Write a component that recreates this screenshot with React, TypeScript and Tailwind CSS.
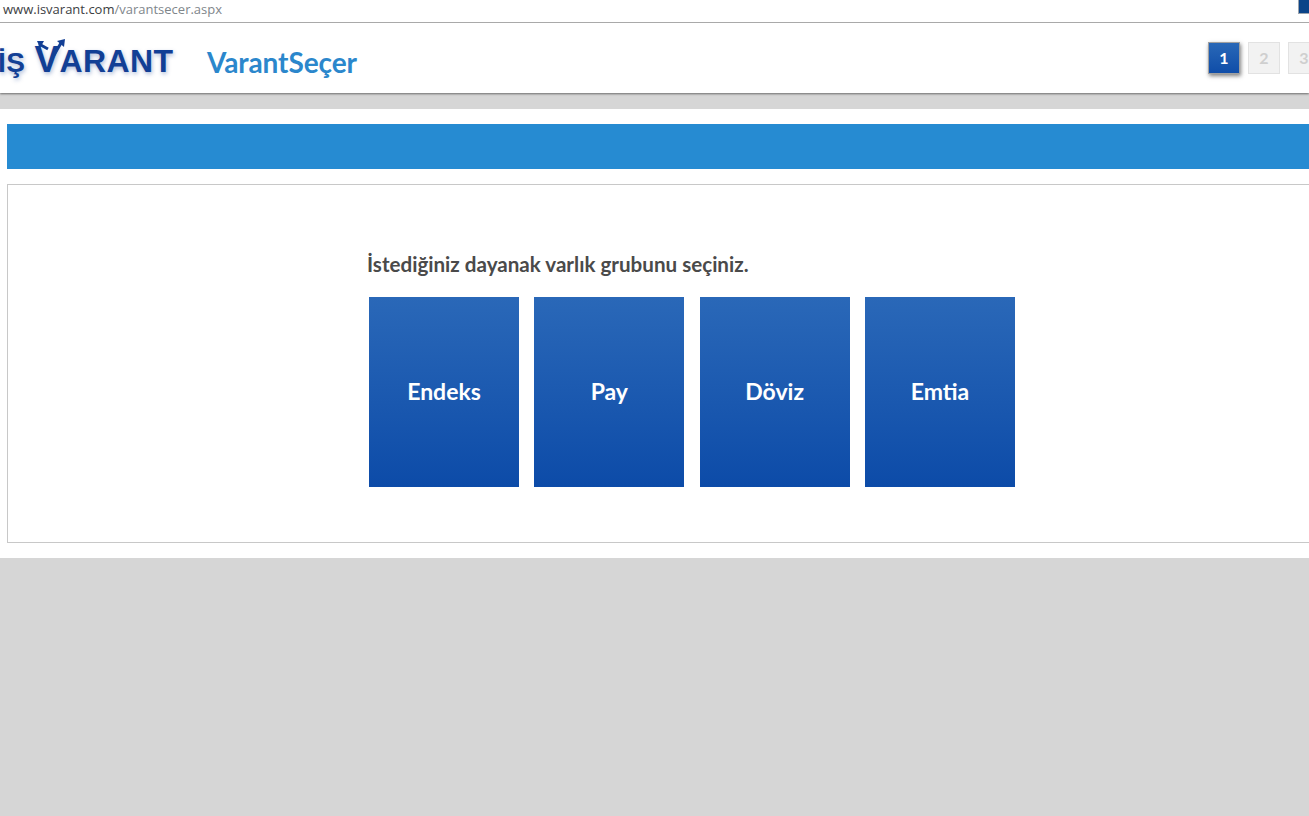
export default function App() {
  const cards = ["Endeks", "Pay", "Döviz", "Emtia"];
  return (
    <div className="flex h-[816px] w-[1309px] flex-col overflow-hidden bg-[#d6d6d6] font-['Lato','Noto_Sans',sans-serif]">
      <div className="relative flex h-[23px] shrink-0 items-start border-b border-[#a9a9a9] bg-white pl-[3px] font-['Open_Sans',sans-serif] text-[13px] leading-[18px]">
        <span className="text-[#3c4043]">www.isvarant.com</span>
        <span className="text-[#80868b]">/varantsecer.aspx</span>
        <div className="absolute left-[1298px] top-0 h-[14px] w-[20px] border-b border-l border-[#9aa3ad] bg-[#0b4488]" />
      </div>
      <header className="flex h-[70px] shrink-0 items-center justify-between bg-white shadow-[0_1px_2px_rgba(0,0,0,0.5)]">
        <div className="flex items-center">
          <div className="relative ml-[-2px] w-[176px] whitespace-nowrap pt-[2px] font-['Liberation_Sans',sans-serif] font-bold leading-none tracking-[0.4px] text-[#123f95] [text-shadow:1px_2px_4px_rgba(18,58,140,0.35)]">
            <span className="text-[28px]">İŞ </span>
            <span className="ml-[1px] text-[37px]">V</span>
            <span className="text-[32px]">ARANT</span>
            <svg className="absolute left-[36px] top-[-1px]" width="34" height="22" viewBox="0 0 34 22" fill="none">
              <path d="M5 6L14 11" stroke="#123f95" strokeWidth="3" />
              <path d="M3 3L10 3L6 10Z" fill="#123f95" />
              <path d="M20 17L27 5" stroke="#123f95" strokeWidth="3" />
              <path d="M23 3L31 1L30 9Z" fill="#123f95" />
            </svg>
          </div>
          <h1 className="ml-[33px] pt-[8px] text-[28px] font-bold leading-none tracking-[-0.1px] text-[#2b87cc]">VarantSeçer</h1>
        </div>
        <div className="mr-[-11px] flex gap-2 text-[16px] font-bold">
          <div className="flex h-8 w-8 items-center justify-center border border-[#a0a0a0] bg-gradient-to-b from-[#2968b7] to-[#0f4da8] text-white shadow-[1px_2px_4px_rgba(0,0,0,0.5)]">1</div>
          <div className="flex h-8 w-8 items-center justify-center border border-[#e2e2e2] bg-[#f2f2f2] text-[#cfcfcf]">2</div>
          <div className="flex h-8 w-8 items-center justify-center border border-[#e2e2e2] bg-[#f2f2f2] text-[#cfcfcf]">3</div>
        </div>
      </header>
      <main className="mt-[16px] flex h-[449px] w-[1309px] flex-col gap-[15px] bg-white pl-[7px] pt-[15px]">
        <div className="h-[45px] w-[1330px] shrink-0 bg-[#268bd2]" />
        <section className="h-[359px] w-[1330px] shrink-0 border border-[#c8c8c8] bg-white pl-[359px] pt-[65px]">
          <h2 className="text-[20.6px] font-bold leading-[28px] text-[#4a4a4a]">İstediğiniz dayanak varlık grubunu seçiniz.</h2>
          <div className="ml-[2px] mt-[19px] flex gap-[15.33px]">
            {cards.map((c) => (
              <div key={c} className="flex h-[190px] w-[150px] items-center justify-center bg-gradient-to-b from-[#2a68b8] to-[#0c4ba8] pb-[2px] text-[23px] font-bold text-white">
                {c}
              </div>
            ))}
          </div>
        </section>
      </main>
    </div>
  );
}
